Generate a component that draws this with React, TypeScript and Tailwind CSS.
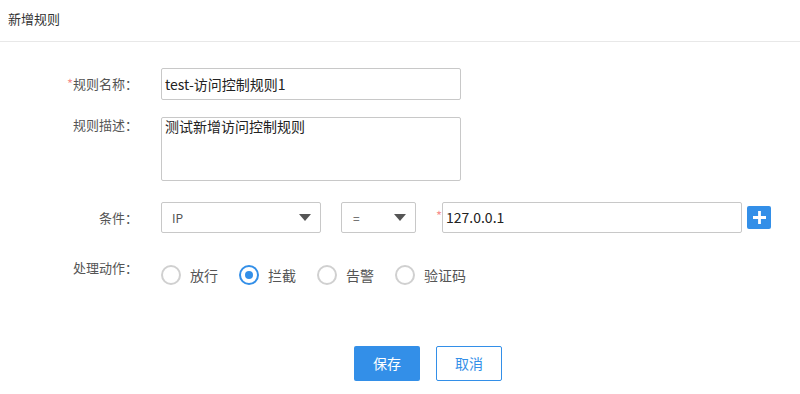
import React from "react";

const font = { fontFamily: '"Microsoft YaHei", "Noto Sans CJK SC", "Noto Sans", sans-serif' };

function Caret() {
  return (
    <svg width="12" height="7" viewBox="0 0 12 7" className="shrink-0">
      <path d="M0 0 L12 0 L6 7 Z" fill="#555" />
    </svg>
  );
}

function Radio({ checked, label }: { checked?: boolean; label: string }) {
  return (
    <div className="flex items-center">
      <div
        className={
          checked
            ? "w-[20px] h-[20px] rounded-full border-[2px] border-[#338fe8] flex items-center justify-center"
            : "w-[20px] h-[20px] rounded-full border-[2px] border-[#d0d0d0]"
        }
      >
        {checked && <div className="w-[8px] h-[8px] rounded-full bg-[#338fe8]" />}
      </div>
      <span className="ml-[9px] text-[14px] text-[#555] leading-[20px]">{label}</span>
    </div>
  );
}

export default function App() {
  return (
    <div className="w-[800px] h-[394px] bg-white text-[#333] overflow-hidden" style={font}>
      <div className="h-[42px] border-b border-[#e8e8e8] flex items-center pl-[8px] text-[13px] text-[#333] pb-[3px]">
        新增规则
      </div>
      <div className="pt-[26px] flex flex-col">
        {/* name */}
        <div className="flex items-center h-[32px]">
          <div className="w-[150px] pr-[12px] text-right text-[13px] text-[#555]">
            <span className="text-[#f78f8f]">*</span>规则名称：
          </div>
          <div className="ml-[11px] w-[300px] h-[32px] border border-[#c8c8c8] rounded-[2px] flex items-center pl-[3px] text-[14px] text-[#222]">
            test-访问控制规则1
          </div>
        </div>
        {/* desc */}
        <div className="flex mt-[17px]">
          <div className="w-[150px] pr-[12px] text-right text-[13px] text-[#555] leading-[16px]">规则描述：</div>
          <div className="ml-[11px] w-[300px] h-[64px] border border-[#c8c8c8] rounded-[2px] pl-[3px] pt-[1px] text-[14px] text-[#222] leading-[14px]">
            测试新增访问控制规则
          </div>
        </div>
        {/* condition */}
        <div className="flex items-center mt-[21px] h-[31px]">
          <div className="w-[150px] pr-[12px] text-right text-[13px] text-[#555]">条件：</div>
          <div className="ml-[11px] w-[160px] h-[31px] border border-[#c8c8c8] rounded-[2px] flex items-center justify-between pl-[10px] pr-[9px] text-[12px] text-[#555]">
            <span>IP</span>
            <Caret />
          </div>
          <div className="ml-[20px] w-[75px] h-[31px] border border-[#c8c8c8] rounded-[2px] flex items-center justify-between pl-[11px] pr-[9px] text-[12px] text-[#555]">
            <span>=</span>
            <Caret />
          </div>
          <span className="ml-[20px] text-[13px] text-[#f78f8f] w-[6px] self-start mt-[4px]">*</span>
          <div className="w-[300px] h-[31px] border border-[#c8c8c8] rounded-[2px] flex items-center pl-[3px] text-[14px] text-[#222]">
            127.0.0.1
          </div>
          <div className="ml-[5px] w-[24px] h-[23px] rounded-[2px] bg-[#338fe8] flex items-center justify-center">
            <svg width="15" height="15" viewBox="0 0 15 15">
              <path d="M7.5 1 V14 M1 7.5 H14" stroke="#fff" strokeWidth="2.8" />
            </svg>
          </div>
        </div>
        {/* action */}
        <div className="flex mt-[25px]">
          <div className="w-[150px] pr-[12px] text-right text-[13px] text-[#555]">处理动作：</div>
          <div className="ml-[11px] flex items-center gap-[21px] mt-[7px]">
            <Radio label="放行" />
            <Radio checked label="拦截" />
            <Radio label="告警" />
            <Radio label="验证码" />
          </div>
        </div>
        {/* buttons */}
        <div className="flex mt-[61px] pl-[354px] gap-[16px]">
          <div className="w-[66px] h-[35px] rounded-[2px] bg-[#338fe8] text-white text-[14px] flex items-center justify-center">
            保存
          </div>
          <div className="w-[66px] h-[35px] rounded-[2px] border border-[#338fe8] text-[#338fe8] text-[14px] flex items-center justify-center">
            取消
          </div>
        </div>
      </div>
    </div>
  );
}
